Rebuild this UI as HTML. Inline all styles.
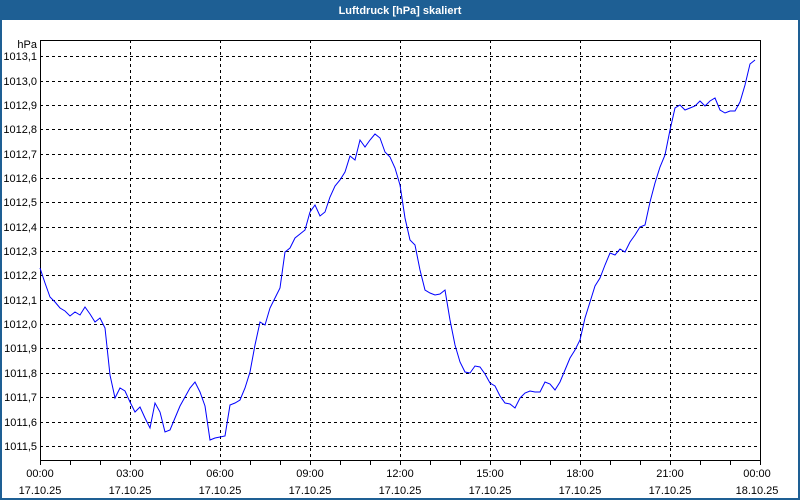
<!DOCTYPE html>
<html><head><style>
html,body{margin:0;padding:0;width:800px;height:500px;overflow:hidden;background:#fff}
svg{display:block}
text{font-family:"Liberation Sans",sans-serif;font-size:11px;fill:#000}
</style></head><body>
<svg width="800" height="500" xmlns="http://www.w3.org/2000/svg">
<rect x="0" y="0" width="800" height="500" fill="#1e5f94"/>
<rect x="2" y="20" width="796" height="478" fill="#fff"/>
<text x="400" y="14" text-anchor="middle" style="fill:#fff;font-weight:bold;font-size:11px">Luftdruck [hPa] skaliert</text>
<g stroke="#000" stroke-width="1" stroke-dasharray="3,3" shape-rendering="crispEdges">
<line x1="40" y1="56.5" x2="760" y2="56.5"/>
<line x1="40" y1="81.5" x2="760" y2="81.5"/>
<line x1="40" y1="105.5" x2="760" y2="105.5"/>
<line x1="40" y1="129.5" x2="760" y2="129.5"/>
<line x1="40" y1="154.5" x2="760" y2="154.5"/>
<line x1="40" y1="178.5" x2="760" y2="178.5"/>
<line x1="40" y1="202.5" x2="760" y2="202.5"/>
<line x1="40" y1="227.5" x2="760" y2="227.5"/>
<line x1="40" y1="251.5" x2="760" y2="251.5"/>
<line x1="40" y1="275.5" x2="760" y2="275.5"/>
<line x1="40" y1="300.5" x2="760" y2="300.5"/>
<line x1="40" y1="324.5" x2="760" y2="324.5"/>
<line x1="40" y1="348.5" x2="760" y2="348.5"/>
<line x1="40" y1="373.5" x2="760" y2="373.5"/>
<line x1="40" y1="397.5" x2="760" y2="397.5"/>
<line x1="40" y1="422.5" x2="760" y2="422.5"/>
<line x1="40" y1="446.5" x2="760" y2="446.5"/>
<line x1="130.5" y1="40" x2="130.5" y2="460"/>
<line x1="220.5" y1="40" x2="220.5" y2="460"/>
<line x1="310.5" y1="40" x2="310.5" y2="460"/>
<line x1="400.5" y1="40" x2="400.5" y2="460"/>
<line x1="490.5" y1="40" x2="490.5" y2="460"/>
<line x1="580.5" y1="40" x2="580.5" y2="460"/>
<line x1="670.5" y1="40" x2="670.5" y2="460"/>
</g>
<rect x="40.5" y="40.5" width="720" height="420" fill="none" stroke="#000" shape-rendering="crispEdges"/>
<g stroke="#000" shape-rendering="crispEdges">
<line x1="40.5" y1="460" x2="40.5" y2="465"/><line x1="70.5" y1="460" x2="70.5" y2="465"/><line x1="100.5" y1="460" x2="100.5" y2="465"/><line x1="130.5" y1="460" x2="130.5" y2="465"/><line x1="160.5" y1="460" x2="160.5" y2="465"/><line x1="190.5" y1="460" x2="190.5" y2="465"/><line x1="220.5" y1="460" x2="220.5" y2="465"/><line x1="250.5" y1="460" x2="250.5" y2="465"/><line x1="280.5" y1="460" x2="280.5" y2="465"/><line x1="310.5" y1="460" x2="310.5" y2="465"/><line x1="340.5" y1="460" x2="340.5" y2="465"/><line x1="370.5" y1="460" x2="370.5" y2="465"/><line x1="400.5" y1="460" x2="400.5" y2="465"/><line x1="430.5" y1="460" x2="430.5" y2="465"/><line x1="460.5" y1="460" x2="460.5" y2="465"/><line x1="490.5" y1="460" x2="490.5" y2="465"/><line x1="520.5" y1="460" x2="520.5" y2="465"/><line x1="550.5" y1="460" x2="550.5" y2="465"/><line x1="580.5" y1="460" x2="580.5" y2="465"/><line x1="610.5" y1="460" x2="610.5" y2="465"/><line x1="640.5" y1="460" x2="640.5" y2="465"/><line x1="670.5" y1="460" x2="670.5" y2="465"/><line x1="700.5" y1="460" x2="700.5" y2="465"/><line x1="730.5" y1="460" x2="730.5" y2="465"/><line x1="760.5" y1="460" x2="760.5" y2="465"/>
</g>
<g text-anchor="end">
<text x="37" y="48">hPa</text>
<text x="37" y="60">1013,1</text><text x="37" y="85">1013,0</text><text x="37" y="109">1012,9</text><text x="37" y="133">1012,8</text><text x="37" y="158">1012,7</text><text x="37" y="182">1012,6</text><text x="37" y="206">1012,5</text><text x="37" y="231">1012,4</text><text x="37" y="255">1012,3</text><text x="37" y="279">1012,2</text><text x="37" y="304">1012,1</text><text x="37" y="328">1012,0</text><text x="37" y="352">1011,9</text><text x="37" y="377">1011,8</text><text x="37" y="401">1011,7</text><text x="37" y="426">1011,6</text><text x="37" y="450">1011,5</text>
</g>
<g text-anchor="middle">
<text x="40" y="477">00:00</text><text x="40" y="494">17.10.25</text>
<text x="130" y="477">03:00</text><text x="130" y="494">17.10.25</text>
<text x="220" y="477">06:00</text><text x="220" y="494">17.10.25</text>
<text x="310" y="477">09:00</text><text x="310" y="494">17.10.25</text>
<text x="400" y="477">12:00</text><text x="400" y="494">17.10.25</text>
<text x="490" y="477">15:00</text><text x="490" y="494">17.10.25</text>
<text x="580" y="477">18:00</text><text x="580" y="494">17.10.25</text>
<text x="670" y="477">21:00</text><text x="670" y="494">17.10.25</text>
<text x="757" y="477">00:00</text><text x="757" y="494">18.10.25</text>
</g>
<polyline fill="none" stroke="#0000ff" stroke-width="1" points="40,268 45,283 50,297 55,302 60,308 65,311 70,316 75,312 80,315 85,307 90,314 95,322 100,318 105,328 110,375 115,398 120,388 125,391 130,402 135,412 140,407 145,418 150,428 155,403 160,412 165,432 170,430 175,418 180,406 185,397 190,388 195,382 200,392 205,406 210,440 215,438 220,437 225,436 230,405 235,403 240,400 245,388 250,372 255,345 260,322 265,325 270,308 275,298 280,288 285,252 290,248 295,238 300,234 305,230 310,212 315,205 320,216 325,212 330,197 335,186 340,180 345,172 350,156 355,160 360,140 365,147 370,140 375,134 380,138 385,152 390,157 395,168 400,185 405,218 410,240 415,245 420,270 425,290 430,293 435,295 440,294 445,290 450,320 455,345 460,362 465,372 470,373 475,366 480,367 485,374 490,383 495,386 500,396 505,403 510,404 515,408 520,398 525,393 530,391 535,392 540,392 545,382 550,384 555,390 560,382 565,370 570,358 575,350 580,340 585,318 590,302 595,286 600,278 605,265 610,253 615,255 620,249 625,252 630,242 635,235 640,227 645,225 650,202 655,183 660,167 665,155 670,130 675,108 680,105 685,110 690,108 695,106 700,101 705,106 710,101 715,98 720,110 725,113 730,111 735,111 740,102 745,85 750,64 755,60"/>
</svg>
</body></html>
